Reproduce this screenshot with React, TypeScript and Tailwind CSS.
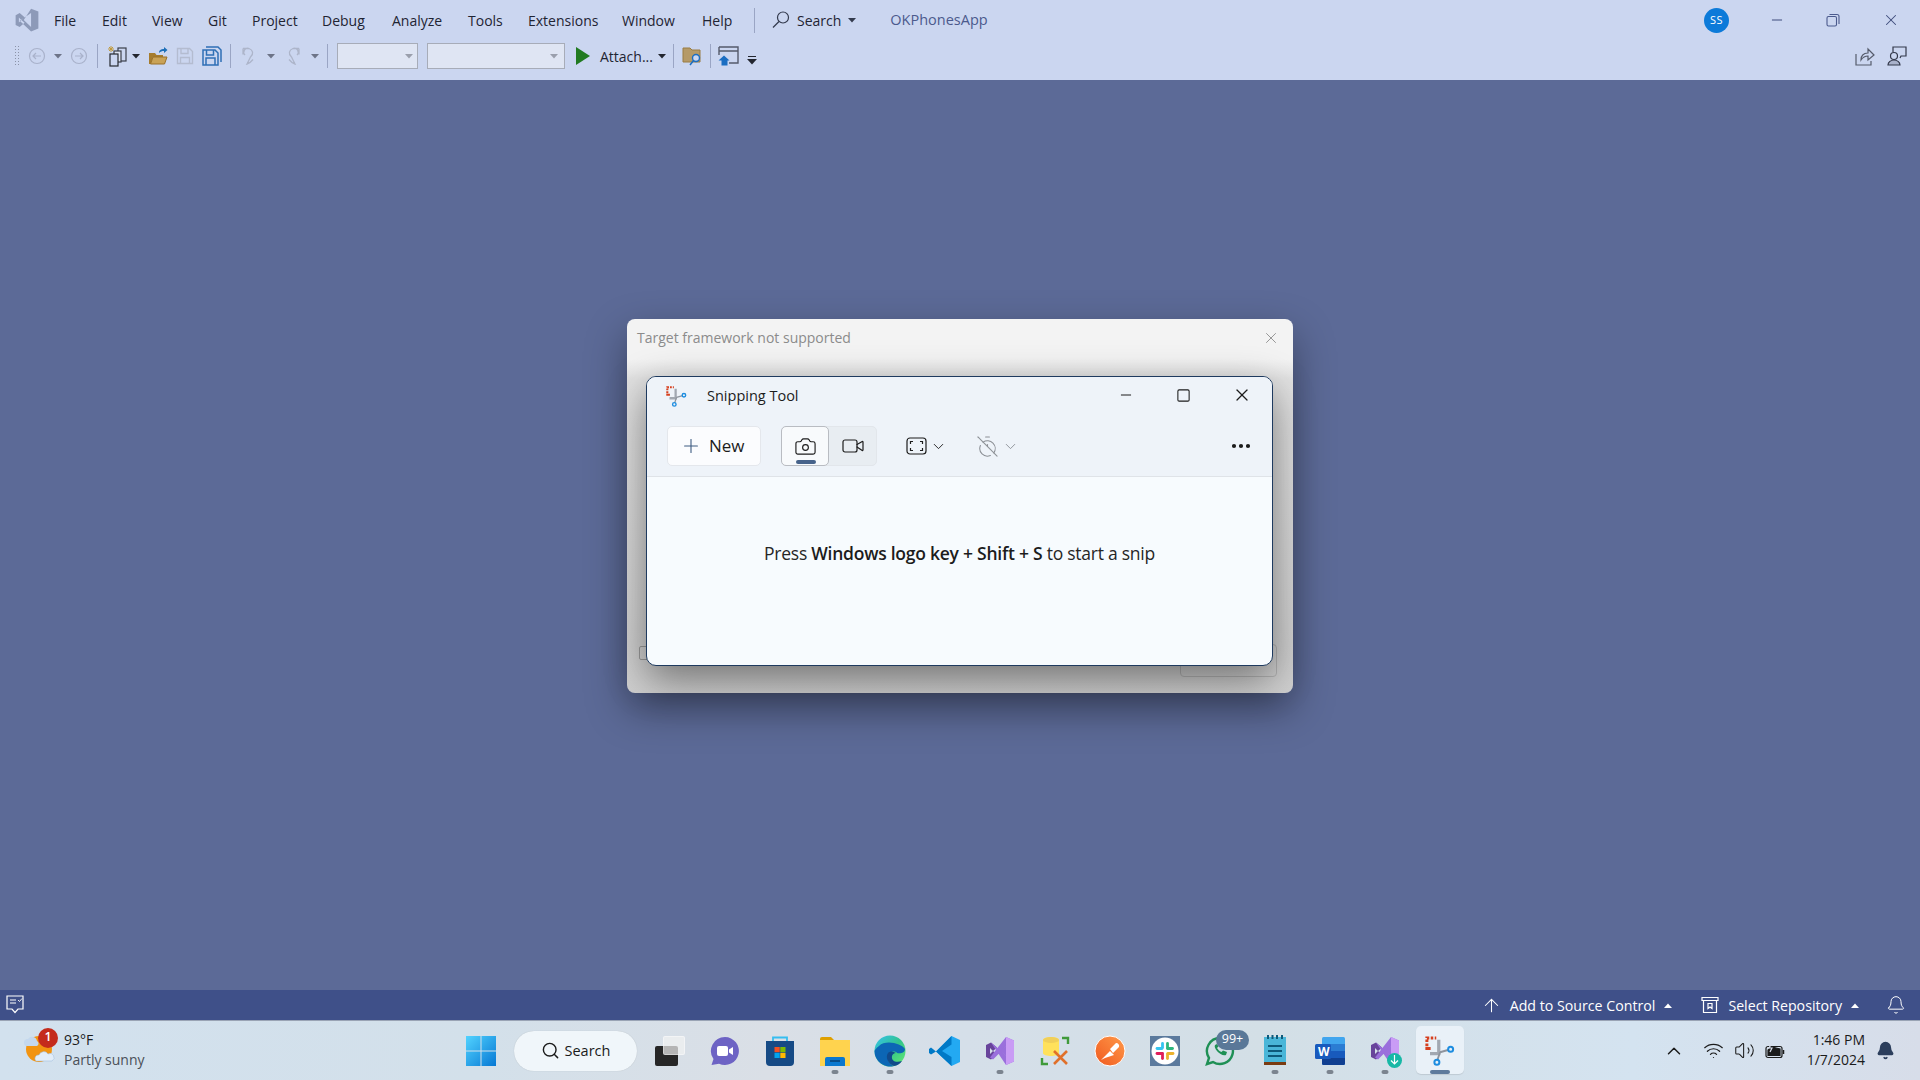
import React from "react";
import { ArrowUp, Bell, Camera, ChevronDown, ChevronUp, Search, Video, Volume2, Wifi, X, Minus, Square, Plus, MoreHorizontal, TimerOff } from "lucide-react";

const font = "font-['Open_Sans','Noto_Sans',sans-serif]";

const menus = [
  ["File", "w-[48px]"], ["Edit", "w-[50px]"], ["View", "w-[56px]"], ["Git", "w-[44px]"], ["Project", "w-[70px]"],
  ["Debug", "w-[70px]"], ["Analyze", "w-[76px]"], ["Tools", "w-[60px]"], ["Extensions", "w-[94px]"], ["Window", "w-[80px]"], ["Help", "w-[52px]"],
];

function Caret({ className = "" }: { className?: string }) {
  return <svg width="8" height="5" viewBox="0 0 8 5" className={className}><path d="M0 0h8L4 4.5z" fill="currentColor" /></svg>;
}

function VS({ size = 32, a = "#68449b", b = "#9a6fdc", c = "#c99cf5" }: { size?: number; a?: string; b?: string; c?: string }) {
  return (
    <svg width={size} height={size} viewBox="0 0 32 32">
      <path d="M2 10l5-2.5 6 5 -4 3.5 -3 -3v6l3-3 4 3.500-6 5L2 22z" fill={a} />
      <path d="M7 7.500l15 13V11.500L9 24.500 6 22.500 22 2l8 3.500v21L22 30z" fill={b} />
      <path d="M22 2l8 3.500v21L22 30z" fill={c} />
      <path d="M22 11v10l-6-5z" fill={b} />
    </svg>
  );
}

function Sep({ className = "" }: { className?: string }) {
  return <div className={`w-px h-6 bg-[#9aa5c4] shrink-0 ${className}`} />;
}

function TopBars() {
  return (
    <div className={`h-20 shrink-0 bg-[#cbd6f0] ${font} text-[14px] text-[#1f2433]`}>
      <div className="h-10 flex items-center">
        <div className="w-[54px] pl-[14px] shrink-0">
          <svg width="26" height="26" viewBox="0 0 32 32">
            <path d="M2 10l5-2.500 6 5-4 3.500-3-3v6l3-3 4 3.500-6 5L2 22z M21 2l9 3.500v21L21 30 7 17 21 7.500v17l-9-8.500z" fill="#8d9ab8" fillRule="evenodd" />
          </svg>
        </div>
        {menus.map(([m, w]) => <div key={m} className={`${w} shrink-0`}>{m}</div>)}
        <div className="w-px h-[25px] bg-[#9aa5c4] shrink-0" />
        <svg width="20" height="20" viewBox="0 0 20 20" className="ml-[16px] mr-[6px] text-[#333a4d]" fill="none" stroke="currentColor" strokeWidth="1.2">
          <circle cx="12" cy="7.500" r="5.500" /><path d="M8 11.500l-6 6" />
        </svg>
        <span>Search</span>
        <Caret className="ml-[7px] text-[#333a4d]" />
        <span className="ml-[34px] text-[14.500px] text-[#4b5a8d]">OKPhonesApp</span>
        <div className="ml-auto w-[25px] h-[25px] rounded-full bg-[#0c7ad9] text-white text-[11px] flex items-center justify-center tracking-[0.5px]">SS</div>
        <Minus size={16} strokeWidth={1.500} className="ml-[40px] text-[#3f4d7c]" />
        <svg width="14" height="14" viewBox="0 0 14 14" className="ml-[41px]" fill="none" stroke="#4b5a8d" strokeWidth="1.100">
          <rect x="1" y="3.500" width="9.500" height="9.500" rx="1.500" /><path d="M3.500 1.500h7.500a2 2 0 0 1 2 2V11" />
        </svg>
        <X size={18} strokeWidth={1.400} className="ml-[42px] mr-[20px] text-[#3f4d7c]" />
      </div>
      <div className="h-10 pb-[8px] flex items-center relative">
        <div className="ml-[14px] w-[5px] h-[22px] shrink-0 bg-[radial-gradient(#8b93a8_1px,transparent_1px)] bg-[length:3px_3px]" />
        <svg width="18" height="18" viewBox="0 0 18 18" className="ml-[9px] text-[#a9b2cb]" fill="none" stroke="currentColor" strokeWidth="1.200"><circle cx="9" cy="9" r="7.500" /><path d="M13 9H5.500M8 6L5 9l3 3" /></svg>
        <Caret className="ml-[8px] text-[#6d7488]" />
        <svg width="18" height="18" viewBox="0 0 18 18" className="ml-[8px] text-[#a9b2cb]" fill="none" stroke="currentColor" strokeWidth="1.200"><circle cx="9" cy="9" r="7.500" /><path d="M5 9h7.500M10 6l3 3-3 3" /></svg>
        <Sep className="ml-[9px]" />
        <svg width="20" height="22" viewBox="0 0 20 22" className="ml-[9px]" fill="none">
          <path d="M4 1v6M1 4h6M2 2l4 4M6 2L2 6" stroke="#c09a3c" strokeWidth="1" />
          <rect x="11" y="3" width="8" height="13" fill="#cbd6f0" stroke="#3b3f4a" strokeWidth="1.200" />
          <rect x="7" y="6" width="7" height="11" fill="#dfe5f3" stroke="#3b3f4a" strokeWidth="1.200" />
          <rect x="3" y="9" width="8" height="12" fill="#cbd6f0" stroke="#26282f" strokeWidth="1.200" />
        </svg>
        <Caret className="ml-[5px] text-[#23262f]" />
        <svg width="20" height="20" viewBox="0 0 20 20" className="ml-[8px]">
          <path d="M1 7h6l1.500 2H15v2H5L2.500 18H1z" fill="#a67c2d" /><path d="M5 11h14l-2.500 7H2.500z" fill="#c9a256" stroke="#9a7128" /><path d="M11 7c0-3 2-4 5-4V1l3.500 3L16 7V5c-2 0-3.500.5-5 2z" fill="#1d6fb8" />
        </svg>
        <svg width="18" height="18" viewBox="0 0 18 18" className="ml-[8px]" fill="none" stroke="#b4bcd0" strokeWidth="1.400"><path d="M1.500 1.500h12l3 3v12h-15z" /><path d="M5 1.500v5h7v-5M4.500 16.500v-6h9v6" /></svg>
        <svg width="20" height="20" viewBox="0 0 20 20" className="ml-[8px]" fill="none" stroke="#2f6fb5" strokeWidth="1.500"><path d="M4 1h12l3 3v12M1 4h12l3 3v12H1z" /><path d="M4.500 4v5h7V4M4 19v-7h9v7" /></svg>
        <Sep className="ml-[8px]" />
        <svg width="20" height="20" viewBox="0 0 20 20" className="ml-[10px]" fill="none" stroke="#adb5ca" strokeWidth="1.300"><path d="M4 9C1 6 4 1 8 2.500 12 4 13 8 9.500 11 8.500 13 7 16 6 18c2-.5 4-2 6-4.500M8 2.500H2M2 2.500v6" /></svg>
        <Caret className="ml-[6px] text-[#6d7488]" />
        <svg width="20" height="20" viewBox="0 0 20 20" className="ml-[6px]" fill="none" stroke="#adb5ca" strokeWidth="1.300"><path d="M16 9c3-3 0-8-4-6.500C8 4 7 8 10.500 11c1 2 2.500 5 3.500 7-2-.5-4-2-6-4.500M12 2.500h6M18 2.500v6" /></svg>
        <Caret className="ml-[10px] text-[#6d7488]" />
        <Sep className="ml-[8px]" />
        <div className="ml-[9px] w-[81px] h-[26px] bg-[#dfe5f3] border border-[#a7acb8] shrink-0 flex items-center justify-end pr-[4px]"><Caret className="text-[#9a9fac]" /></div>
        <div className="ml-[9px] w-[138px] h-[26px] bg-[#dfe5f3] border border-[#a7acb8] shrink-0 flex items-center justify-end pr-[6px]"><Caret className="text-[#9a9fac]" /></div>
        <svg width="14" height="18" viewBox="0 0 14 18" className="ml-[11px]"><path d="M0 0l14 9-14 9z" fill="#217a21" /></svg>
        <span className="ml-[10px]">Attach...</span>
        <Caret className="ml-[5px] text-[#23262f]" />
        <Sep className="ml-[7px]" />
        <svg width="20" height="20" viewBox="0 0 20 20" className="ml-[8px]"><path d="M1 2h7l2 2h8v12H1z" fill="#b59a68" stroke="#9a7d42" /><circle cx="14" cy="12" r="3.500" fill="#cbd6f0" stroke="#1b6ec2" strokeWidth="1.400" /><path d="M11.500 14.500L8 19" stroke="#1b6ec2" strokeWidth="1.500" /></svg>
        <Sep className="ml-[8px]" />
        <svg width="21" height="20" viewBox="0 0 21 20" className="ml-[7px]" fill="none"><path d="M1 1h19v16H11" stroke="#555b6b" strokeWidth="1.400" /><path d="M1 1v8M1 5h19" stroke="#555b6b" strokeWidth="1.400" /><path d="M0.500 14.500L6 9.500l5.500 5H9.500V19.500h-6V14.500z" fill="#1b6ec2" /></svg>
        <svg width="10" height="9" viewBox="0 0 10 9" className="ml-[8px] mt-[8px]"><path d="M1 .5h8" stroke="#23262f" strokeWidth="1" /><path d="M0 3h10L5 8.500z" fill="#23262f" /></svg>
        <svg width="20" height="20" viewBox="0 0 20 20" className="ml-auto" fill="none" stroke="#555b6b" strokeWidth="1.200"><path d="M1 8v11h15v-4M6 14c0-4 2-7 7-7V3l6 6-6 5V10c-3 0-5 1-7 4z" /></svg>
        <svg width="20" height="20" viewBox="0 0 20 20" className="ml-[12px] mr-[13px]" fill="none" stroke="#33384a" strokeWidth="1.200"><path d="M6 6V1h13v9h-5l-1 2" /><circle cx="7" cy="10" r="3.500" /><path d="M1 19c0-3 3-5 6-5s6 2 6 5z" fill="#a9b2cb" /></svg>
      </div>
    </div>
  );
}

function SnipIcon({ size = 24 }: { size?: number }) {
  return (
    <svg width={size} height={size} viewBox="0 0 24 24" fill="none">
      <path d="M1.500 8V1.500H9" stroke="#d6401f" strokeWidth="2.400" strokeDasharray="2 1.200" />
      <path d="M1.500 8.500v1.500h3" stroke="#d6401f" strokeWidth="2.400" />
      <path d="M11 3v11H4" stroke="#a2a8b1" strokeWidth="2.600" />
      <path d="M12 13l7-2M12 13l-2 6" stroke="#8e949d" strokeWidth="1.500" />
      <circle cx="20.500" cy="10.500" r="2" stroke="#1d8de0" strokeWidth="1.600" />
      <circle cx="9.500" cy="21" r="2" stroke="#1d8de0" strokeWidth="1.600" />
    </svg>
  );
}

function Dialog() {
  return (
    <div className="absolute left-[627px] top-[239px] w-[666px] h-[374px] rounded-[8px] bg-[linear-gradient(#f3f3f3_0,#f3f3f3_40px,#e2e2e2_60px,#cfcfcf_100%)] shadow-[0_16px_40px_rgba(0,0,0,0.38)]">
      <div className={`h-[37px] flex items-center justify-between pl-[10px] pr-[13px] ${font} text-[14px] text-[#8b8b8b]`}>
        <span>Target framework not supported</span>
        <X size={18} strokeWidth={1.200} className="text-[#8c8c8c]" />
      </div>
      <div className="absolute left-[12px] top-[327px] w-[10px] h-[14px] rounded-[2px] border border-[#9a9a9a]" />
      <div className="absolute right-[16px] top-[325px] w-[97px] h-[33px] rounded-[4px] border border-[#b4b4b4]" />
      <div className="absolute left-[19px] top-[57px] w-[627px] h-[290px] rounded-[10px] border border-[#1e3a5f] overflow-hidden bg-[#f7fbfe] shadow-[0_14px_40px_rgba(0,0,0,0.45)] flex flex-col">
        <div className={`h-[100px] bg-[#eef3f9] border-b border-[#dfe3e8] shrink-0 ${font} text-[#1c1c1c]`}>
          <div className="h-[38px] flex items-center relative">
            <div className="ml-[19px]"><SnipIcon size={21} /></div>
            <span className="ml-[20px] text-[14.500px]">Snipping Tool</span>
            <Minus size={16} strokeWidth={1.500} className="ml-auto -mt-[2px]" />
            <Square size={15} strokeWidth={1.700} className="ml-[42px] -mt-[2px]" />
            <X size={20} strokeWidth={1.500} className="ml-[41px] mr-[20px] -mt-[2px]" />
          </div>
          <div className="flex items-center pl-[20px] h-[40px] mt-[11px]">
            <div className="w-[94px] h-[40px] rounded-[5px] border border-[#e4e7ec] bg-[#fbfcfe] flex items-center pl-[12px] shrink-0">
              <Plus size={22} strokeWidth={1.200} className="text-[#3d5a80]" />
              <span className="ml-[7px] text-[17px]">New</span>
            </div>
            <div className="ml-[20px] flex h-[40px] w-[96px] rounded-[5px] bg-[#e8edf2] border border-[#e2e6eb] shrink-0">
              <div className="relative w-[48px] h-[40px] -mt-px -ml-px rounded-[5px] bg-[#f8fafc] border border-[#b9bcc2] flex items-center justify-center">
                <Camera size={23} strokeWidth={1.200} />
                <div className="absolute left-[14px] bottom-[1px] w-[20px] h-[4px] rounded-full bg-[#46628a]" />
              </div>
              <div className="flex-1 flex items-center justify-center"><Video size={24} strokeWidth={1.200} /></div>
            </div>
            <svg width="21" height="20" viewBox="0 0 21 20" className="ml-[29px]" fill="none" stroke="#1c1c1c" strokeWidth="1.200">
              <rect x="1" y="2" width="19" height="16" rx="3" /><path d="M4.500 8V5.500H7M14 5.500h2.500V8M16.500 12v2.500H14M7 14.500H4.500V12" />
            </svg>
            <ChevronDown size={17} strokeWidth={1.300} className="ml-[3px]" />
            <TimerOff size={23} strokeWidth={1.100} className="ml-[29px] text-[#8c9096]" />
            <ChevronDown size={17} strokeWidth={1.300} className="ml-[3px] text-[#8c9096]" />
            <MoreHorizontal size={24} strokeWidth={2.200} className="ml-auto mr-[19px]" />
          </div>
        </div>
        <div className="flex-1 flex justify-center pt-[64px]">
          <p className="font-['Open_Sans',sans-serif] text-[17.500px] text-[#262626] h-[24px] leading-[24px] tracking-[-0.250px]">
            Press <span className="font-semibold text-[#1c1c1c]">Windows logo key + Shift + S</span> to start a snip
          </p>
        </div>
      </div>
    </div>
  );
}

function StatusBar() {
  return (
    <div className={`h-[31px] shrink-0 bg-[#3f5089] border-b border-[#9aa4b5] flex items-center text-white text-[14.200px] ${font}`}>
      <svg width="18" height="20" viewBox="0 0 18 20" className="ml-[6px]" fill="none" stroke="white" strokeWidth="1.200">
        <path d="M1 1h16v13H12l-3 3.500L6 14H1z" /><path d="M4 5h6M4 8h6" /><path d="M12 5l1.500 1.500L16 3.500" strokeWidth=".900" />
      </svg>
      <ArrowUp size={21} strokeWidth={1.200} className="ml-auto" />
      <span className="ml-[8px] pt-[1px]">Add to Source Control</span>
      <Caret className="ml-[9px] rotate-180" />
      <svg width="18" height="18" viewBox="0 0 18 18" className="ml-[29px]" fill="none" stroke="white" strokeWidth="1.200">
        <path d="M1 1.500h16v3H1zM2.500 4.500v12h13v-12" /><path d="M7 7.500h4v5l-2-1.500-2 1.500z" />
      </svg>
      <span className="ml-[9px] pt-[1px]">Select Repository</span>
      <Caret className="ml-[9px] rotate-180" />
      <Bell size={20} strokeWidth={1.200} className="ml-[27px] mr-[14px]" />
    </div>
  );
}

function Pill({ active = false }: { active?: boolean }) {
  return <div className={`absolute bottom-[6px] left-1/2 -translate-x-1/2 h-[4px] rounded-full ${active ? "w-[20px] bg-[#5d7a9c]" : "w-[7px] bg-[#7b848f]"}`} />;
}

function TaskIcon({ children, pill = false, active = false }: { children: React.ReactNode; pill?: boolean; active?: boolean }) {
  return (
    <div className="relative w-[55px] h-[59px] shrink-0 flex items-center justify-center">
      {active && <div className="absolute left-[3.500px] top-[5px] w-[48px] h-[48px] rounded-[5px] bg-[#e9f1f8] shadow-[0_1px_1px_rgba(0,0,0,0.1)]" />}
      <div className="relative flex">{children}</div>
      {(pill || active) && <Pill active={active} />}
    </div>
  );
}

function Taskbar() {
  return (
    <div className={`h-[59px] shrink-0 flex items-center bg-[linear-gradient(90deg,#d2e1ee_0%,#d3e0ea_25%,#dadfe6_40%,#d5dfe9_50%,#d3dfe6_66%,#d4e3f0_85%,#d7dde9_100%)] ${font}`}>
      <div className="w-[453px] shrink-0 flex items-center h-full">
        <div className="relative ml-[24px] -mt-[10px] w-[32px] h-[34px]">
          <svg width="32" height="34" viewBox="0 0 32 34">
            <circle cx="15" cy="20" r="13" fill="#f29411" />
            <path d="M0 14a3.500 3.500 0 0 1 4-4 5 5 0 0 1 9 2 2.800 2.800 0 0 1 0 5H3a3 3 0 0 1-3-3z" fill="#c4d8ee" />
            <path d="M12 32a3.500 3.500 0 0 1 3-6 5 5 0 0 1 9-1 3.500 3.500 0 0 1 4 7z" fill="#e2edf8" stroke="#9ab8d8" strokeWidth=".500" />
          </svg>
          <div className="absolute left-[14px] -top-[1px] w-[20px] h-[20px] rounded-full bg-[#c42b1c] text-white text-[12.500px] font-semibold flex items-center justify-center">1</div>
        </div>
        <div className="ml-[8px] -mt-[1px] text-[14px] leading-[20px]">
          <div className="text-[#1b1b1b]">93°F</div>
          <div className="text-[#4b5058]">Partly sunny</div>
        </div>
      </div>
      <TaskIcon>
        <svg width="30" height="30" viewBox="0 0 30 30">
          <defs><linearGradient id="w" x1="0" y1="0" x2="1" y2="1"><stop offset="0" stopColor="#52d3ff" /><stop offset="1" stopColor="#0678d4" /></linearGradient></defs>
          <path d="M0 0h14.500v14.500H0zM15.500 0H30v14.500H15.500zM0 15.500h14.500V30H0zM15.500 15.500H30V30H15.500z" fill="url(#w)" />
        </svg>
      </TaskIcon>
      <div className="ml-[6px] w-[123px] h-[40px] rounded-full bg-[#f0f6fa] shadow-[0_0_1px_rgba(0,0,0,0.2)] flex items-center justify-center shrink-0 text-[14.500px] text-[#1b1b1b]">
        <Search size={19} strokeWidth={1.800} className="mr-[5px]" />Search
      </div>
      <div className="ml-[5.500px] flex">
        <TaskIcon>
          <div className="relative w-[30px] h-[30px]">
            <div className="absolute left-0 bottom-0 w-[23px] h-[20px] rounded-[2px] bg-[#262626]" />
            <div className="absolute right-0 top-0 w-[22px] h-[19px] rounded-[2px] bg-[#f2f2f2]/70 border border-white/40" />
          </div>
        </TaskIcon>
        <TaskIcon>
          <svg width="30" height="30" viewBox="0 0 30 30">
            <path d="M15 1a14 14 0 1 1-6 26.700L1.500 29 3.500 23A14 14 0 0 1 15 1z" fill="#6d63c4" />
            <rect x="7" y="10" width="11" height="10" rx="2" fill="#fff" /><path d="M19 13.500l4-2.500v8l-4-2.500z" fill="#fff" />
          </svg>
        </TaskIcon>
        <TaskIcon>
          <svg width="30" height="32" viewBox="0 0 30 32">
            <path d="M8 6V2.500h14V6" fill="none" stroke="#35bdf0" strokeWidth="1.800" />
            <path d="M1 6h28v21a4 4 0 0 1-4 4H5a4 4 0 0 1-4-4z" fill="#164a85" />
            <rect x="9.500" y="12" width="5.200" height="5.200" fill="#f25022" /><rect x="15.300" y="12" width="5.200" height="5.200" fill="#7fba00" />
            <rect x="9.500" y="17.800" width="5.200" height="5.200" fill="#00a4ef" /><rect x="15.300" y="17.800" width="5.200" height="5.200" fill="#ffb900" />
          </svg>
        </TaskIcon>
        <TaskIcon pill>
          <svg width="32" height="30" viewBox="0 0 32 30">
            <path d="M1 3a2 2 0 0 1 2-2h9l3 3h-14z" fill="#dfa000" /><path d="M1 4h30v26H1z" fill="#ffd34e" />
            <path d="M6 30v-7a2 2 0 0 1 2-2h16a2 2 0 0 1 2 2v7z" fill="#0b78cf" /><path d="M11 25h10" stroke="#093f72" strokeWidth="1.500" />
          </svg>
        </TaskIcon>
        <TaskIcon pill>
          <svg width="32" height="32" viewBox="0 0 32 32">
            <defs><linearGradient id="e" x1="0" y1="0" x2="1" y2="1"><stop offset="0" stopColor="#35c1f1" /><stop offset=".5" stopColor="#32c48c" /><stop offset="1" stopColor="#66eb6e" /></linearGradient></defs>
            <circle cx="16" cy="16" r="15.500" fill="url(#e)" />
            <path d="M0.500 16A15.500 15.500 0 0 0 20 31c-6-2-8-9-4-13 2-2 6-2 7 0 3 1 8 0 8-4C28 9 12 4 5 11 2 13 1 15 .5 16z" fill="#0c66b5" />
            <path d="M14 18c-3 4 0 11 6 13 3-.500 6-2 8-5-6 2-11 0-10-5 .2-1.500 2-3 4-3-3-2-6-2-8 0z" fill="#114a8b" />
          </svg>
        </TaskIcon>
        <TaskIcon>
          <svg width="32" height="32" viewBox="0 0 32 32">
            <path d="M22.500 1L31 5v22l-8.500 4L7 16.500z" fill="#23a9f2" />
            <path d="M22.500 1L7 16.500 2 12.500 0 14v4l2 1.500 5-3L22.500 31V22L13 16l9.500-6.500z" fill="#0079c6" />
          </svg>
        </TaskIcon>
        <TaskIcon pill><VS /></TaskIcon>
        <TaskIcon>
          <svg width="30" height="30" viewBox="0 0 30 30">
            <path d="M3 4c0-4 16-4 16 0v13c0 4-16 4-16 0z" fill="#ffe15b" />
            <ellipse cx="11" cy="4" rx="8" ry="3" fill="#f0cf5a" />
            <path d="M22 2h6v6M2 22v6h6" stroke="#3f9a3a" strokeWidth="2.400" fill="none" />
            <path d="M14 28L27 15M14 15l13 13" stroke="#e0702a" strokeWidth="2.600" />
          </svg>
        </TaskIcon>
        <TaskIcon>
          <svg width="32" height="32" viewBox="0 0 32 32">
            <defs><linearGradient id="p" x1="0" y1="1" x2="1" y2="0"><stop offset="0" stopColor="#f0591e" /><stop offset="1" stopColor="#ff9a4a" /></linearGradient></defs>
            <circle cx="16" cy="16" r="15" fill="url(#p)" stroke="#fff" strokeWidth="1" />
            <path d="M7 25l9-9 4 4-9 3zM16 14l6-6a3 3 0 0 1 3 4l-6 6z" fill="#fff" />
          </svg>
        </TaskIcon>
        <TaskIcon>
          <div className="w-[30px] h-[30px] bg-[#5b7a9d] flex items-center justify-center">
            <svg width="28" height="28" viewBox="0 0 28 28">
              <circle cx="14" cy="14" r="13.500" fill="#fff" />
              <path d="M11.500 6.500v4" stroke="#36c5f0" strokeWidth="2.800" strokeLinecap="round" /><path d="M6 11.500h5" stroke="#36c5f0" strokeWidth="2.800" strokeLinecap="round" />
              <path d="M16.500 6.500v5" stroke="#2eb67d" strokeWidth="2.800" strokeLinecap="round" /><path d="M21.500 11.500H17" stroke="#2eb67d" strokeWidth="2.800" strokeLinecap="round" />
              <path d="M17 16.500h5" stroke="#ecb22e" strokeWidth="2.800" strokeLinecap="round" /><path d="M16.500 17v4.500" stroke="#ecb22e" strokeWidth="2.800" strokeLinecap="round" />
              <path d="M6 16.500h5" stroke="#e01e5a" strokeWidth="2.800" strokeLinecap="round" /><path d="M11.500 16.500v5" stroke="#e01e5a" strokeWidth="2.800" strokeLinecap="round" />
            </svg>
          </div>
        </TaskIcon>
        <TaskIcon>
          <svg width="30" height="30" viewBox="0 0 30 30" fill="none">
            <path d="M15 2a13 13 0 1 1-7 24l-6 2 2-6A13 13 0 0 1 15 2z" stroke="#1f9055" strokeWidth="2.400" />
            <path d="M10 9c-2 3 6 12 11 10l1-3-4-1.500-1.500 1.500C14 15 13 13.500 12 12l1.500-1.500L12 8z" fill="#1f9055" />
          </svg>
          <div className="absolute -right-[14px] -top-[6px] w-[33px] h-[20px] rounded-[10px] bg-[#5a7898] text-white text-[12.500px] flex items-center justify-center">99+</div>
        </TaskIcon>
        <TaskIcon pill>
          <svg width="24" height="31" viewBox="0 0 24 31">
            <rect x="1" y="2" width="22" height="26" fill="#4ab6d8" /><rect x="1" y="27" width="22" height="3" fill="#7a3c12" />
            <path d="M5 0v4M9.500 0v4M14 0v4M19 0v4" stroke="#0e5a7a" strokeWidth="2" /><path d="M5 11h14M5 16h14M5 21h14" stroke="#0e5a7a" strokeWidth="1.800" />
          </svg>
        </TaskIcon>
        <TaskIcon pill>
          <svg width="30" height="28" viewBox="0 0 30 28">
            <rect x="7" y="0" width="23" height="28" rx="1.500" fill="#41a5ee" /><rect x="7" y="7" width="23" height="7" fill="#2b7cd3" /><rect x="7" y="14" width="23" height="7" fill="#185abd" /><path d="M7 21h23v5.500a1.500 1.500 0 0 1-1.500 1.500H8.500A1.500 1.500 0 0 1 7 26.500z" fill="#103f91" />
            <rect x="0" y="7" width="16" height="15" rx="1.500" fill="#185abd" />
          </svg>
          <span className="absolute left-[3px] top-[7px] text-white text-[12px] font-bold leading-[15px]">W</span>
        </TaskIcon>
        <TaskIcon pill>
          <VS />
          <div className="absolute -right-[1px] -bottom-[1px] w-[15px] h-[15px] rounded-full bg-[#17b8a6] flex items-center justify-center">
            <svg width="9" height="10" viewBox="0 0 9 10" fill="none" stroke="#fff" strokeWidth="1.200"><path d="M4.500 0v9M1 5.500l3.500 3.500L8 5.500" /></svg>
          </div>
        </TaskIcon>
        <TaskIcon active><SnipIcon size={30} /></TaskIcon>
      </div>
      <div className="ml-auto flex items-center text-[#1b1b1b]">
        <ChevronUp size={22} strokeWidth={1.600} />
        <Wifi size={21} strokeWidth={1.400} className="ml-[18px]" />
        <Volume2 size={21} strokeWidth={1.200} className="ml-[10px]" />
        <svg width="20" height="16" viewBox="0 0 20 16" className="ml-[10px]" fill="none" stroke="#1b1b1b" strokeWidth="1.200">
          <rect x="1" y="3.500" width="16" height="11" rx="2" /><path d="M18.500 7v4" strokeWidth="1.500" /><path d="M3 12.500V7l4-3 8 2v6.500z" fill="#1b1b1b" /><path d="M7 0L4 5h3L5 9" stroke="#d7dde9" />
        </svg>
        <div className="ml-[22px] -mt-[1px] text-[14px] leading-[20px] text-right">
          <div>1:46 PM</div>
          <div>1/7/2024</div>
        </div>
        <Bell size={19} fill="#2c3e5c" stroke="#2c3e5c" className="ml-[11px] mr-[25px]" />
      </div>
    </div>
  );
}

export default function App() {
  return (
    <div className="w-[1920px] h-[1080px] flex flex-col overflow-hidden bg-[#5c6a97]">
      <TopBars />
      <div className="flex-1 relative"><Dialog /></div>
      <StatusBar />
      <Taskbar />
    </div>
  );
}
